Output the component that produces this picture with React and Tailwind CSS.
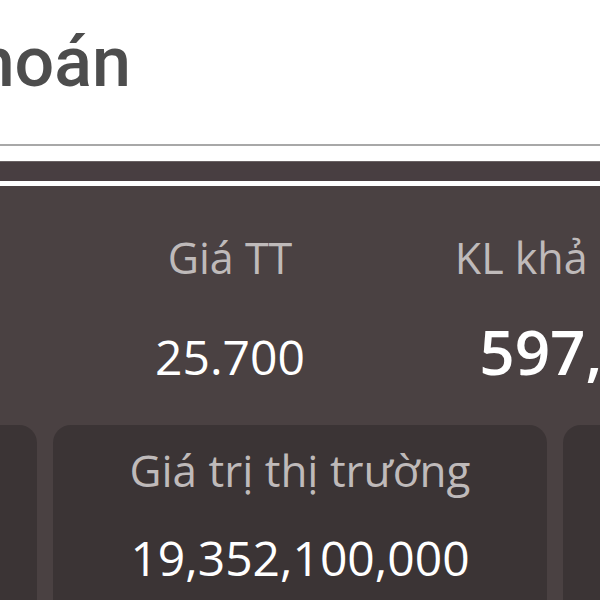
export default function App() {
  const columns = [
    { label: "Mã CK", labelClass: "", value: "HPG", valueClass: "text-[48px] font-normal" },
    { label: "Giá TT", labelClass: "", value: "25.700", valueClass: "text-[48px] font-normal" },
    {
      label: "KL khả dụng",
      labelClass: "pl-[8px]",
      value: "597,000",
      valueClass: "text-[62px] font-semibold pl-[40px]",
    },
  ];

  const cards = [
    { label: "Giá vốn", value: "15,330,000,000" },
    { label: "Giá trị thị trường", value: "19,352,100,000" },
    { label: "Lãi/Lỗ", value: "4,022,100,000" },
  ];

  return (
    <div className="w-[600px] h-[600px] overflow-hidden bg-white font-['Open_Sans',sans-serif]">
      {/* Header */}
      <div className="h-[146px] border-b-2 border-[#a8a8a8] pt-[27px]">
        <div className="w-[131px] flex justify-end overflow-hidden">
          <h1 className="whitespace-nowrap text-[70px] leading-none font-medium text-[#4d4d4d] font-['Roboto',sans-serif]">
            Chứng khoán
          </h1>
        </div>
      </div>

      <div className="h-[15px] bg-white" />
      <div className="h-[20px] bg-[#483e41] border-t border-[#6a6264]" />
      <div className="h-[5px] bg-white" />

      {/* Summary */}
      <div className="bg-[#4a4142] h-[414px] overflow-hidden">
        <div className="flex -ml-[286px] pt-[50px]">
          {columns.map((col) => (
            <div key={col.label} className={`w-[344px] shrink-0 text-center ${col.labelClass}`}>
              <div className="text-[43px] leading-none font-normal text-[#bfbaba] whitespace-nowrap">
                {col.label}
              </div>
            </div>
          ))}
        </div>

        <div className="flex items-baseline -ml-[286px] mt-[41px]">
          {columns.map((col) => (
            <div key={col.label} className="w-[344px] shrink-0 text-center">
              <div
                className={`leading-none text-white whitespace-nowrap ${col.valueClass}`}
              >
                {col.value}
              </div>
            </div>
          ))}
        </div>

        <div className="flex justify-center gap-4 mt-[43px]">
          {cards.map((card) => (
            <div
              key={card.label}
              className="w-[494px] h-[200px] shrink-0 rounded-[18px] bg-[#3b3435] pt-[23px] text-center"
            >
              <div className="text-[44px] leading-none font-normal text-[#bfbaba] whitespace-nowrap">
                {card.label}
              </div>
              <div className="mt-[42px] text-[48px] leading-none text-white whitespace-nowrap">
                {card.value}
              </div>
            </div>
          ))}
        </div>
      </div>
    </div>
  );
}
